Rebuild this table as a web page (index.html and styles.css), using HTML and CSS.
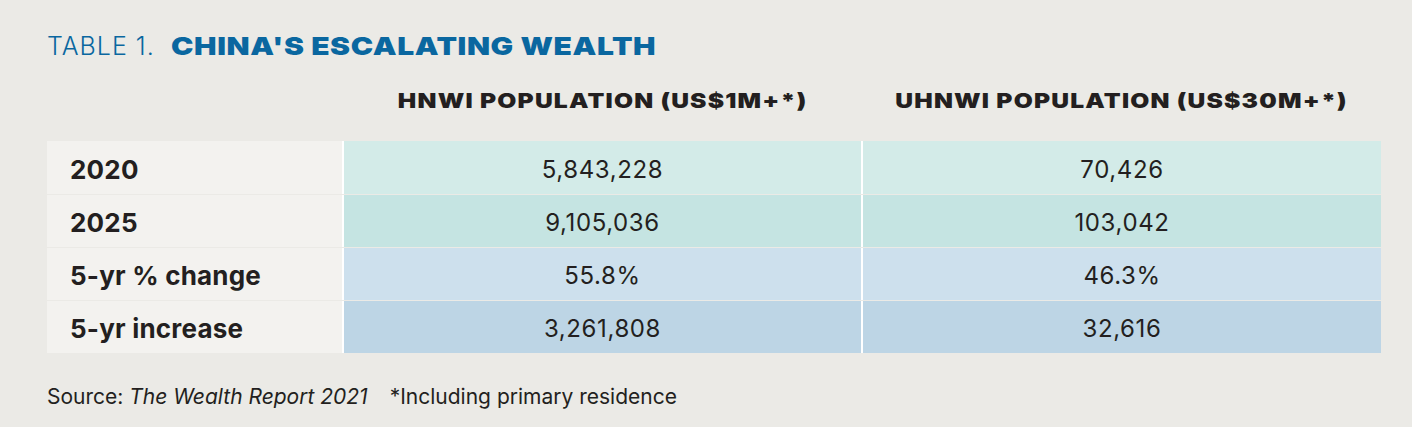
FILE: index.html
```html
<!DOCTYPE html>
<html lang="en">
<head>
<meta charset="utf-8">
<title>Table 1. China's escalating wealth</title>
<link rel="stylesheet" href="styles.css">
</head>
<body>
<div class="page">
  <h1 class="title"><span class="title-num">TABLE 1.</span><span class="title-main">CHINA'S ESCALATING WEALTH</span></h1>
  <div class="head-row">
    <div></div>
    <div class="head-cell"><span class="head-text">HNWI POPULATION (US$1M+*)</span></div>
    <div class="head-cell"><span class="head-text">UHNWI POPULATION (US$30M+*)</span></div>
  </div>
  <div class="table">
    <div class="row row-1">
      <div class="label">2020</div>
      <div class="value">5,843,228</div>
      <div class="value">70,426</div>
    </div>
    <div class="row row-2">
      <div class="label">2025</div>
      <div class="value">9,105,036</div>
      <div class="value">103,042</div>
    </div>
    <div class="row row-3">
      <div class="label">5-yr % change</div>
      <div class="value">55.8%</div>
      <div class="value">46.3%</div>
    </div>
    <div class="row row-4">
      <div class="label">5-yr increase</div>
      <div class="value">3,261,808</div>
      <div class="value">32,616</div>
    </div>
  </div>
  <p class="source">Source: <em>The Wealth Report 2021</em><span class="note">*Including primary residence</span></p>
</div>
</body>
</html>
```
FILE: styles.css
```css
html, body {
  margin: 0;
  padding: 0;
  background: #ebeae6;
}
body {
  font-family: "Inter", "Liberation Sans", sans-serif;
  color: #231f20;
}
.page {
  padding: 31px 31px 0 47px;
}
.title {
  margin: 0;
  font-size: 25px;
  line-height: 30px;
  color: #0a67a0;
  display: flex;
  align-items: baseline;
  gap: 16px;
}
.title-num {
  font-weight: 300;
  letter-spacing: 1px;
}
.title-main {
  display: inline-block;
  font-weight: 900;
  letter-spacing: 0.5px;
  transform: scaleX(1.2);
  transform-origin: left center;
}
.head-row {
  display: grid;
  grid-template-columns: 295px 517px 518px;
  column-gap: 2px;
  margin-top: 28px;
  height: 24px;
}
.head-cell {
  text-align: center;
  font-weight: 900;
  font-size: 20.5px;
  line-height: 24px;
}
.head-text {
  display: inline-block;
  letter-spacing: 1px;
  transform: scaleX(1.2);
  transform-origin: center center;
}
.table {
  margin-top: 28px;
  display: flex;
  flex-direction: column;
  gap: 1px;
  width: 1334px;
}
.row {
  display: grid;
  grid-template-columns: 295px 517px 518px;
  column-gap: 2px;
  background: #ffffff;
  height: 52px;
}
.row-1 {
  height: 53px;
}
.label {
  background: #f3f2ef;
  padding: 3px 0 0 23px;
  font-weight: 700;
  font-size: 26px;
  line-height: 49px;
  letter-spacing: 0.2px;
}
.value {
  text-align: center;
  padding-top: 3px;
  font-size: 24px;
  line-height: 49px;
  letter-spacing: 0.6px;
}
.row-1 .label, .row-1 .value {
  padding-top: 4px;
}
.row-1 .value { background: #d3ebe8; }
.row-2 .value { background: #c5e4e2; }
.row-3 .value { background: #cde0ed; }
.row-4 .value { background: #bdd5e5; }
.source {
  margin: 32px 0 0;
  font-size: 21px;
  line-height: 24px;
}
.source em {
  font-style: italic;
}
.note {
  margin-left: 22px;
}
```
